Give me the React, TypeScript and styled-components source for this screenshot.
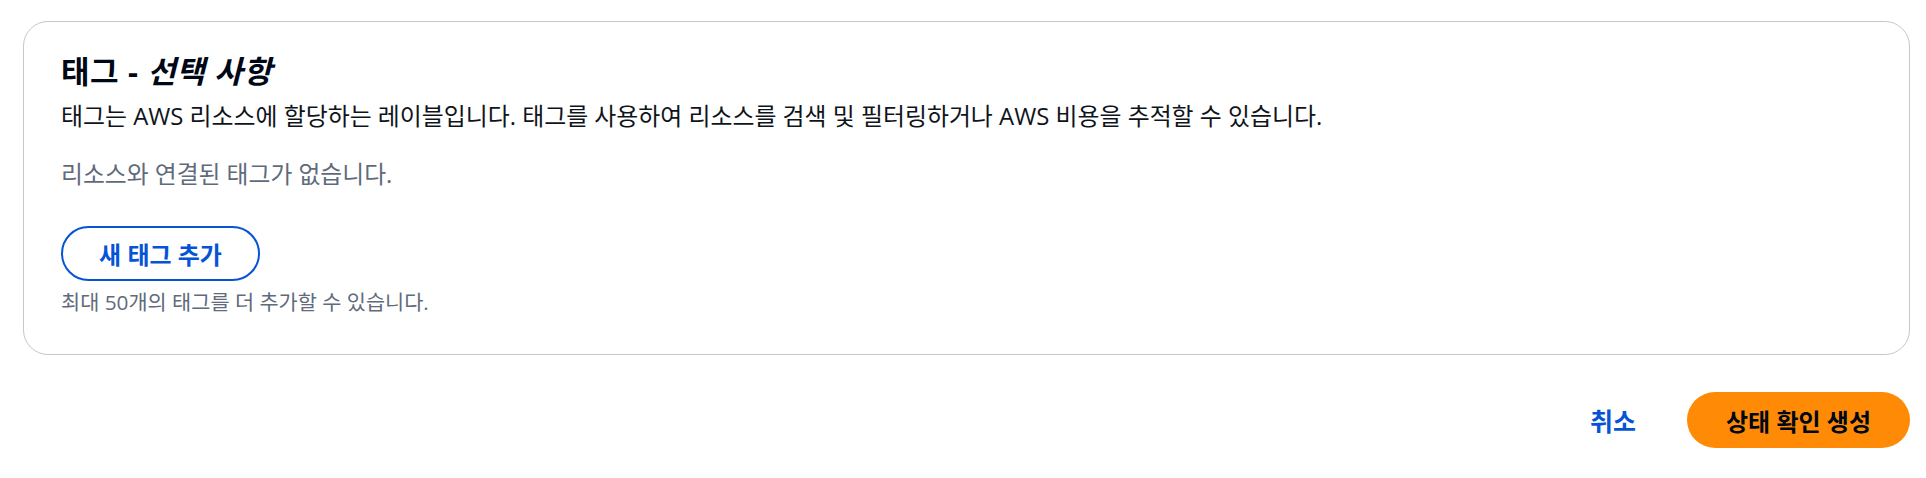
import React from 'react'
import styled, { createGlobalStyle } from 'styled-components'

const GlobalStyle = createGlobalStyle`
  html, body {
    margin: 0;
    padding: 0;
    background: #ffffff;
  }
  body {
    font-family: "Open Sans", "Noto Sans CJK KR", sans-serif;
    color: #000716;
  }
`

const App = () => {
  return (
    <>
      <GlobalStyle />
      <Page>
        <Card>
          <Title>
            태그 - <Optional>선택 사항</Optional>
          </Title>
          <Description>
            태그는 AWS 리소스에 할당하는 레이블입니다. 태그를 사용하여 리소스를 검색 및 필터링하거나 AWS 비용을 추적할 수 있습니다.
          </Description>
          <EmptyText>리소스와 연결된 태그가 없습니다.</EmptyText>
          <OutlineButton>새 태그 추가</OutlineButton>
          <Hint>최대 50개의 태그를 더 추가할 수 있습니다.</Hint>
        </Card>
        <Footer>
          <LinkButton>취소</LinkButton>
          <PrimaryButton>상태 확인 생성</PrimaryButton>
        </Footer>
      </Page>
    </>
  )
}

export default App

const Page = styled.div`
  padding: 21px 16px 0 23px;
`

const Card = styled.div`
  border: 1px solid #c6c6cd;
  border-radius: 25px;
  padding: 31px 37px 41px 37px;
  display: flex;
  flex-direction: column;
  align-items: flex-start;
`

const Title = styled.h2`
  margin: 0;
  font-size: 31px;
  line-height: 36px;
  letter-spacing: 0.6px;
  font-weight: 700;
  color: #000716;
`

const Optional = styled.i`
  font-style: italic;
`

const Description = styled.p`
  margin: 14px 0 0;
  font-size: 23.9px;
  line-height: 26px;
  color: #0f141a;
`

const EmptyText = styled.p`
  margin: 32px 0 0;
  font-size: 23.8px;
  line-height: 26px;
  color: #5f6b7a;
`

const OutlineButton = styled.button`
  margin-top: 39px;
  width: 199px;
  height: 55px;
  border: 2px solid #0654d6;
  border-radius: 28px;
  background: #ffffff;
  color: #0654d6;
  font-family: inherit;
  font-size: 24px;
  font-weight: 700;
  cursor: pointer;
`

const Hint = styled.p`
  margin: 10px 0 0;
  font-size: 20.8px;
  line-height: 22px;
  color: #5f6b7a;
`

const Footer = styled.div`
  display: flex;
  justify-content: flex-end;
  align-items: center;
  gap: 30px;
  margin-top: 37px;
`

const LinkButton = styled.button`
  border: none;
  background: transparent;
  padding: 0 21px;
  color: #0654d6;
  font-family: inherit;
  font-size: 25px;
  font-weight: 700;
  cursor: pointer;
`

const PrimaryButton = styled.button`
  width: 223px;
  height: 56px;
  border: none;
  border-radius: 28px;
  background: #ff8a05;
  color: #000716;
  font-family: inherit;
  font-size: 24px;
  font-weight: 700;
  cursor: pointer;
`
